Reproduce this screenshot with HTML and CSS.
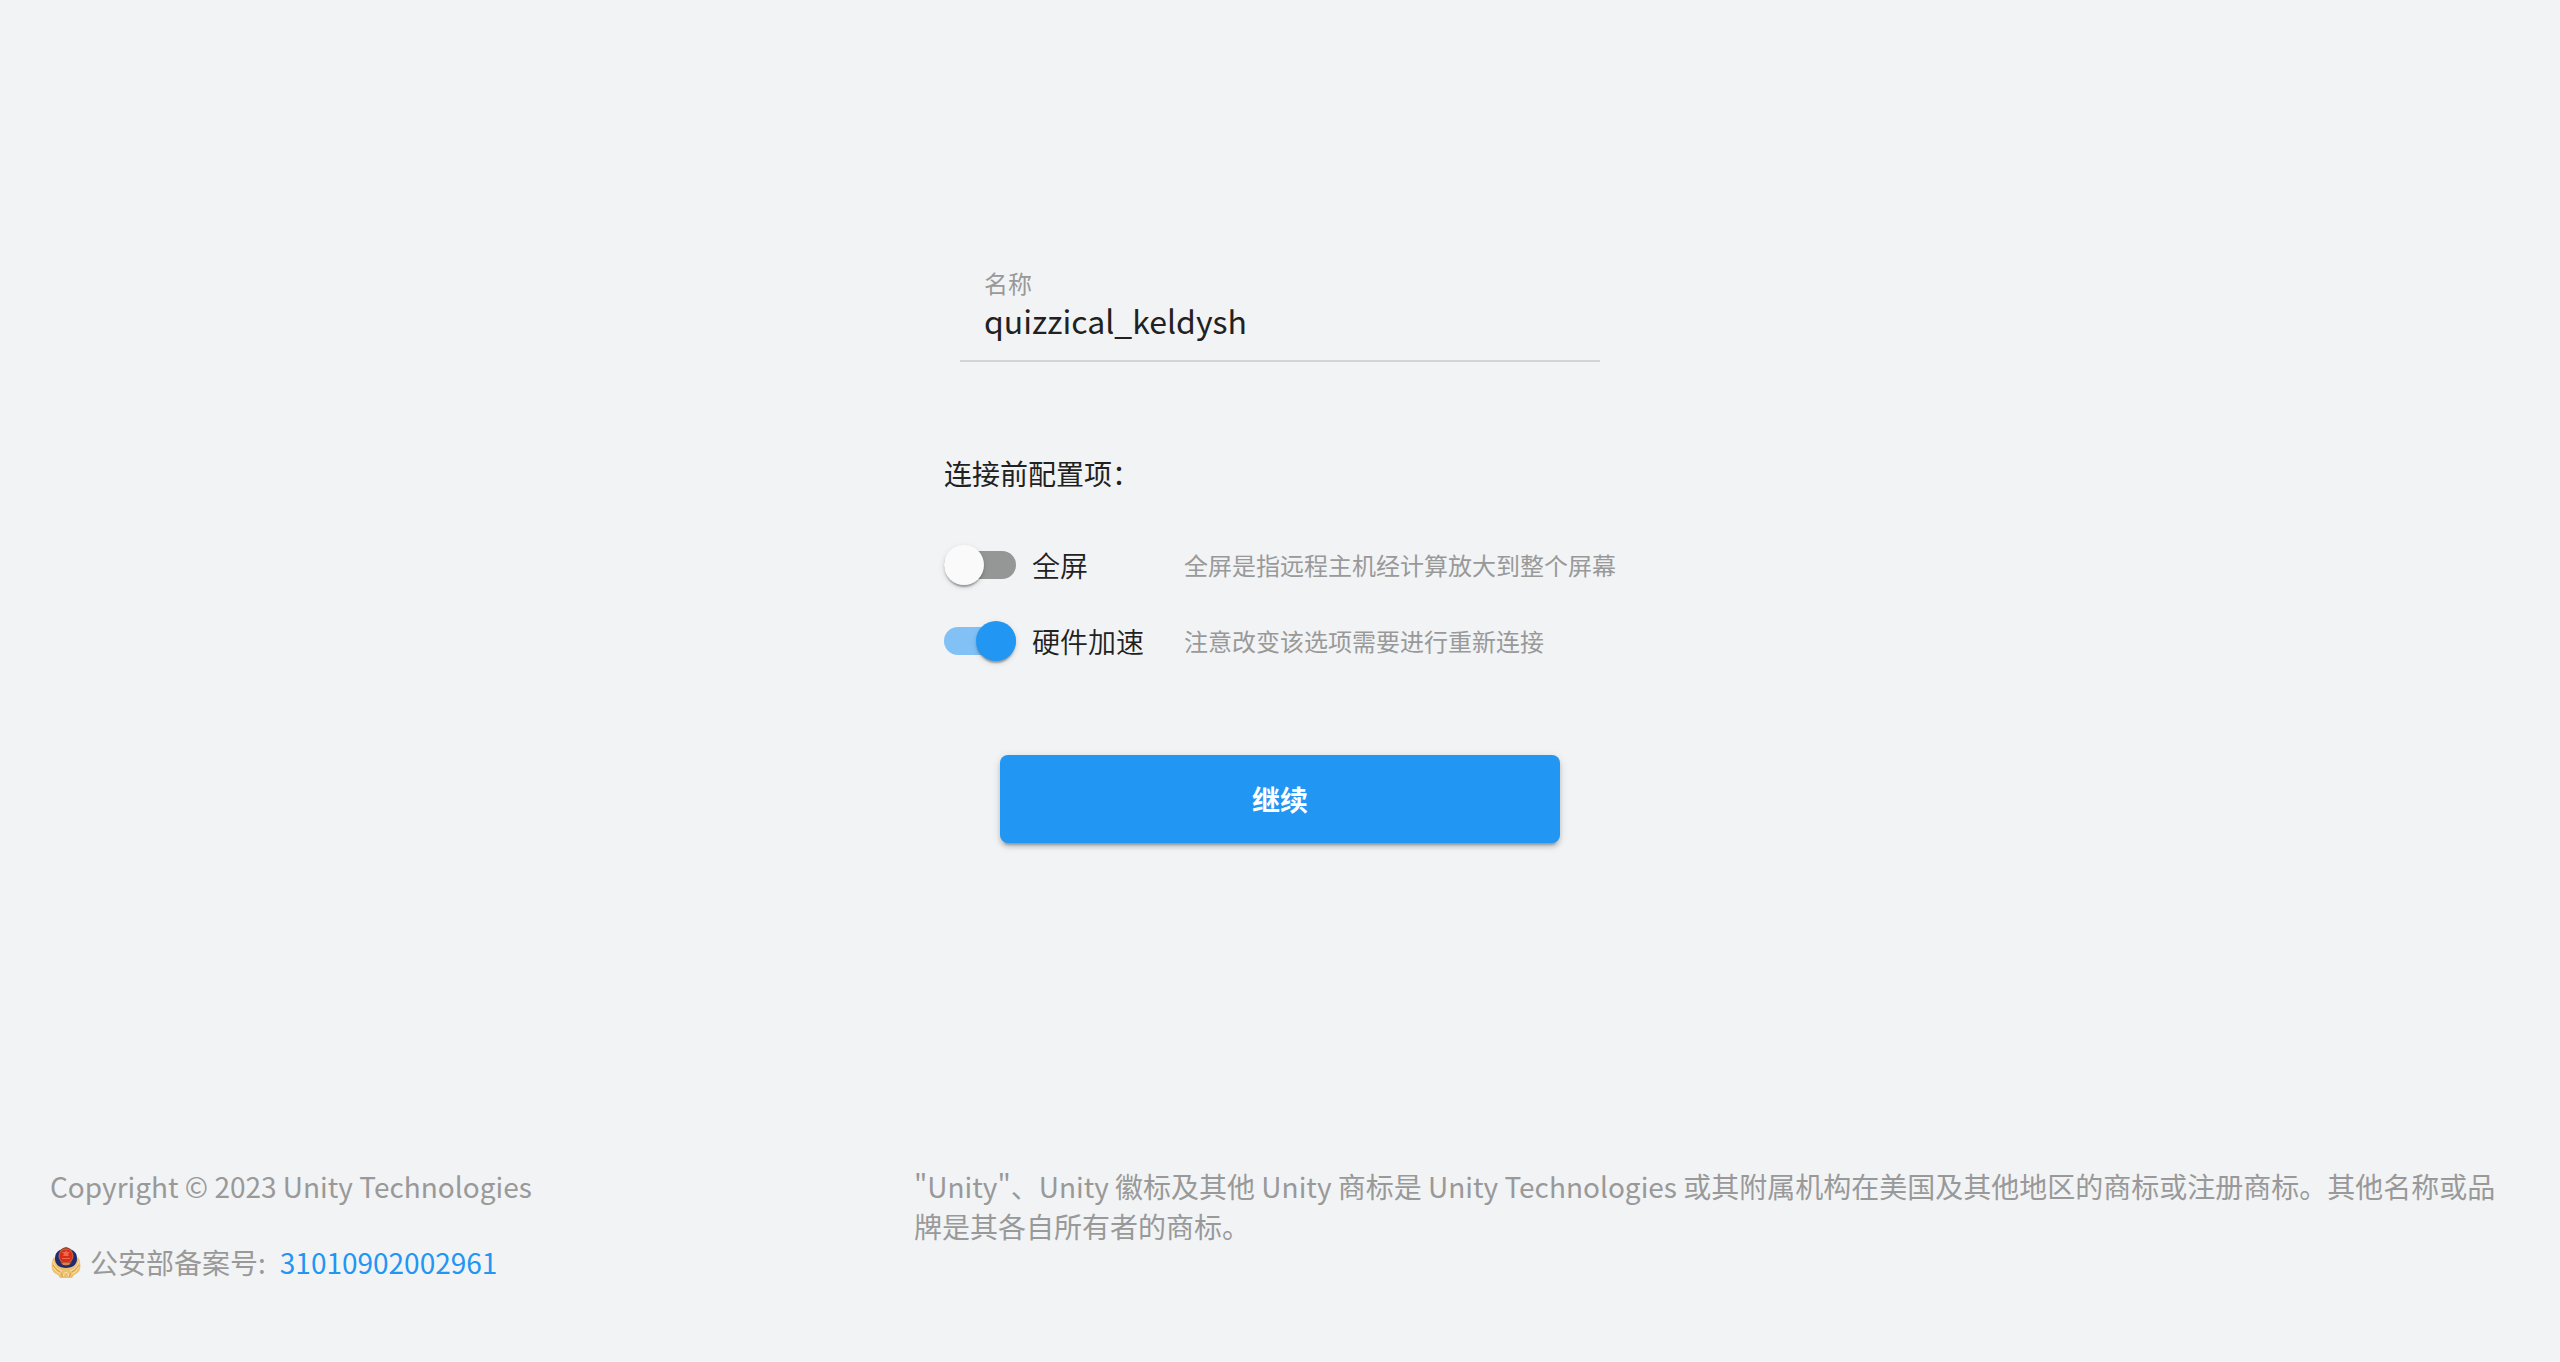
FILE: index.html
```html
<!DOCTYPE html>
<html lang="zh-CN">
<head>
<meta charset="utf-8">
<meta name="viewport" content="width=device-width, initial-scale=1">
<title>连接配置</title>
<link rel="stylesheet" href="styles.css">
</head>
<body>
<main class="main">
  <form class="form">
    <div class="field">
      <label class="field-label" for="name">名称</label>
      <input class="field-input" id="name" type="text" value="quizzical_keldysh" spellcheck="false">
    </div>
    <fieldset class="options">
      <legend class="options-title">连接前配置项：</legend>
      <div class="option">
        <input class="switch" id="fullscreen" type="checkbox" role="switch" aria-describedby="fullscreen-hint">
        <label class="option-label" for="fullscreen">全屏</label>
        <span class="option-hint" id="fullscreen-hint">全屏是指远程主机经计算放大到整个屏幕</span>
      </div>
      <div class="option">
        <input class="switch" id="hardware" type="checkbox" role="switch" aria-describedby="hardware-hint" checked>
        <label class="option-label" for="hardware">硬件加速</label>
        <span class="option-hint" id="hardware-hint">注意改变该选项需要进行重新连接</span>
      </div>
    </fieldset>
    <button class="submit" type="button">继续</button>
  </form>
</main>
<footer class="footer">
  <div class="footer-left">
    <p class="footer-text">Copyright © 2023 Unity Technologies</p>
    <p class="footer-text record">
      <svg class="badge" viewBox="0 0 32 32" aria-hidden="true">
        <path d="M4 11C2 14 1 19 2 23c1 4 4 5 6 6l2 3h12l2-3c2-1 5-2 6-6 1-4 0-9-2-12l-3 5c-2 4-5 6-9 6s-7-2-9-6z" fill="#ecc06f"/>
        <path d="M3 15q2 8 9 10M3 21q3 6 8 7M29 15q-2 8-9 10M29 21q-3 6-8 7M13 31q0-4 3-5 3 1 3 5" fill="none" stroke="#f9e3a8" stroke-width="1"/>
        <path d="M3 19q3 5 7 7M29 19q-3 5-7 7M11 27l2 4M21 27l-2 4" fill="none" stroke="#d49a48" stroke-width="1"/>
        <path d="M10 4C6 6 5 9 5 13c0 5 4 9 11 9s11-4 11-9c0-4-1-7-5-9z" fill="#202a72"/>
        <path d="M10 4l3-2 3-1 3 1 3 2 1 6-2 8-5 2-5-2-2-8z" fill="#9c3b30"/>
        <circle cx="16" cy="10" r="7" fill="#dc2a1c" stroke="#b9733c" stroke-width="1"/>
        <path d="M16 4l1 2h3l-2 2 1 2h-6l1-2-2-2h3zM12 12h8v1h-8z" fill="#ec6a48"/>
        <path d="M12 17h8l-1 2h-6z" fill="#cf8650"/>
      </svg>
      <span>公安部备案号:</span>
      <a class="record-link" href="#">31010902002961</a>
    </p>
  </div>
  <p class="footer-text">"Unity"、Unity 徽标及其他 Unity 商标是 Unity Technologies 或其附属机构在美国及其他地区的商标或注册商标。其他名称或品牌是其各自所有者的商标。</p>
</footer>
</body>
</html>
```
FILE: styles.css
```css
* {
  box-sizing: border-box;
}

body {
  margin: 0;
  min-height: 100vh;
  display: flex;
  flex-direction: column;
  background: #f1f3f5;
  color: #212121;
  font-family: "Noto Sans CJK SC", sans-serif;
  font-size: 28px;
  line-height: 40px;
}

.main {
  flex: 1;
  display: flex;
  justify-content: center;
  padding: 263px 48px 48px;
}

.form {
  display: flex;
  flex-direction: column;
  align-items: center;
}

.field {
  width: 640px;
  max-width: 100%;
  display: flex;
  flex-direction: column;
  padding: 0 24px;
  border-bottom: 2px solid #d2d4d6;
}

.field-label {
  font-size: 24px;
  color: #999;
}

.field-input {
  height: 57px;
  padding: 0 0 24px;
  border: 0;
  outline: 0;
  background: none;
  color: inherit;
  font: inherit;
  font-size: 32px;
}

.options {
  margin: 91px 0 0;
  padding: 0;
  border: 0;
  min-width: 0;
}

.options-title {
  padding: 0;
  margin-bottom: 34px;
}

.option {
  display: grid;
  grid-template-columns: 72px 136px auto;
  column-gap: 16px;
  align-items: center;
  min-height: 76px;
}

.option-label {
  font-weight: 350;
}

.option-hint {
  font-size: 24px;
  color: #999;
}

.switch {
  appearance: none;
  display: flex;
  align-items: center;
  width: 72px;
  height: 28px;
  margin: 0;
  border-radius: 14px;
  background: #959696;
  cursor: pointer;
}

.switch::before {
  content: "";
  width: 40px;
  height: 40px;
  flex: none;
  border-radius: 50%;
  background: #fafafa;
  box-shadow: 0 4px 2px -2px rgba(0, 0, 0, .2), 0 2px 2px rgba(0, 0, 0, .14), 0 2px 6px rgba(0, 0, 0, .12);
}

.switch:checked {
  justify-content: flex-end;
  background: #82c1f6;
}

.switch:checked::before {
  background: #2196f3;
}

.submit {
  width: 560px;
  max-width: 100%;
  height: 88px;
  margin-top: 76px;
  border: 0;
  border-radius: 8px;
  background: #2196f3;
  box-shadow: 0 6px 2px -4px rgba(0, 0, 0, .2), 0 4px 4px rgba(0, 0, 0, .14), 0 2px 10px rgba(0, 0, 0, .12);
  color: #fff;
  font: inherit;
  font-weight: 700;
  cursor: pointer;
}

.footer {
  display: grid;
  grid-template-columns: 816px 1fr;
  column-gap: 48px;
  padding: 0 50px 80px;
  color: #999;
}

.footer-left {
  display: flex;
  flex-direction: column;
  gap: 36px;
}

.footer-text {
  margin: 0;
}

.record {
  display: flex;
  align-items: center;
}

.badge {
  width: 32px;
  height: 32px;
  margin-right: 8px;
}

.record-link {
  margin-left: 14px;
  color: #2196f3;
  text-decoration: none;
}
```
